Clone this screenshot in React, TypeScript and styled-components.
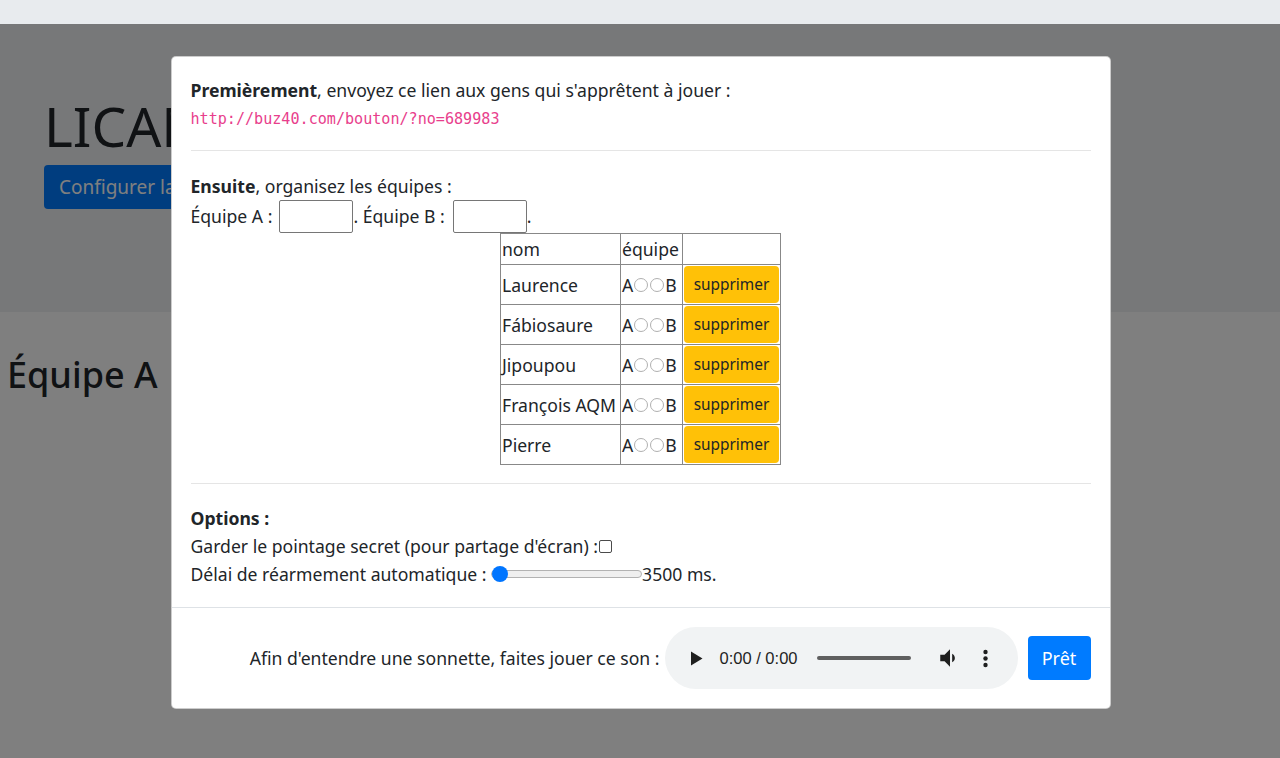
import React from "react";
import styled, { createGlobalStyle } from "styled-components";

const Global = createGlobalStyle`
  html, body { margin: 0; padding: 0; }
  body {
    font-family: "Noto Sans", "Open Sans", sans-serif;
    font-size: 17.6px;
    line-height: 1.5;
    color: #212529;
    background: #fff;
    width: 1280px;
    height: 758px;
    overflow: hidden;
  }
  * { box-sizing: border-box; }
`;

const Page = styled.div`
  position: relative;
  width: 1280px;
  height: 758px;
`;

const TopBar = styled.div`
  height: 24px;
  background: #e8ebee;
`;

const Jumbotron = styled.div`
  background: #eef0f3;
  height: 288px;
  padding: 69px 44px 0 44px;
`;

const Title = styled.h1`
  margin: 0 0 6px 0;
  font-size: 55px;
  font-weight: 400;
  line-height: 1.2;
`;

const BigButton = styled.button`
  height: 44px;
  padding: 0 15px;
  background: #007bff;
  color: #fff;
  border: none;
  border-radius: 4px;
  font-family: inherit;
  font-size: 19px;
`;

const TeamHeading = styled.h2`
  margin: 41px 0 0 7px;
  font-size: 36px;
  font-weight: 500;
  line-height: 1.2;
`;

const Backdrop = styled.div`
  position: absolute;
  top: 24px;
  left: 0;
  right: 0;
  bottom: 0;
  background: rgba(0, 0, 0, 0.5);
  display: flex;
  justify-content: center;
  align-items: flex-start;
  padding: 32px 0 0 1px;
`;

const Modal = styled.div`
  width: 940px;
  background: #fff;
  border: 1px solid rgba(0, 0, 0, 0.2);
  border-radius: 5px;
  display: flex;
  flex-direction: column;
`;

const Body = styled.div`
  padding: 21px 19px 19px 19px;
`;

const Line = styled.div`
  line-height: 24px;
`;

const Code = styled.div`
  font-family: "DejaVu Sans Mono", "Liberation Mono", monospace;
  font-size: 15.1px;
  color: #e83e8c;
  line-height: 22px;
  margin-top: 6px;
`;

const Rule = styled.hr<{ $top: number; $bottom: number }>`
  border: 0;
  border-top: 1px solid rgba(0, 0, 0, 0.1);
  margin: ${(p) => `${p.$top}px 0 ${p.$bottom}px 0`};
`;

const InputRow = styled.div`
  display: flex;
  align-items: center;
  height: 34px;
  margin-top: 1px;
`;

const TeamInput = styled.input<{ $ml: number }>`
  width: 74px;
  height: 33px;
  border: 1px solid #767676;
  border-radius: 2px;
  padding: 0 4px;
  margin: 0 0 0 ${(p) => p.$ml}px;
  font-family: inherit;
  font-size: 16px;
`;

const Table = styled.table`
  margin: 0 auto;
  border-collapse: collapse;
  border: 1px solid #555;
`;

const HeadCell = styled.td`
  border: 1px solid #888;
  padding: 0 1px;
  height: 31px;
  font-weight: 400;
  text-align: left;
  line-height: 24px;
`;

const Cell = styled.td<{ $w?: number }>`
  border: 1px solid #888;
  padding: 1px 1px;
  height: 39px;
  width: ${(p) => (p.$w ? `${p.$w}px` : "auto")};
  white-space: nowrap;
  line-height: 24px;
`;

const TeamPick = styled.span`
  display: inline-flex;
  align-items: center;
`;

const Radio = styled.input`
  appearance: none;
  width: 14px;
  height: 14px;
  margin: 0 1px;
  border: 1px solid #b0b0b0;
  border-radius: 50%;
  background: #fff;
`;

const DeleteButton = styled.button`
  width: 95px;
  height: 37px;
  background: #ffc107;
  color: #212529;
  border: none;
  border-radius: 4px;
  font-family: inherit;
  font-size: 15.4px;
  padding: 0;
  display: block;
`;

const Strong = styled.b`
  font-weight: 700;
`;

const OptionRow = styled.div`
  display: flex;
  align-items: center;
  height: 28px;
  white-space: pre;
`;

const Check = styled.input`
  appearance: none;
  width: 13px;
  height: 13px;
  margin: 0 0 0 1px;
  border: 1px solid #4a4a4a;
  border-radius: 2px;
  background: #fff;
`;

const Range = styled.input`
  appearance: none;
  width: 151px;
  height: 16px;
  margin: 0;
  background: transparent;
  &::-webkit-slider-runnable-track {
    height: 8px;
    background: #efefef;
    border: 1px solid #b2b2b2;
    border-radius: 4px;
  }
  &::-webkit-slider-thumb {
    appearance: none;
    width: 16px;
    height: 16px;
    margin-top: -5px;
    border-radius: 50%;
    background: #0075ff;
    border: none;
  }
`;

const Footer = styled.div`
  border-top: 1px solid #dee2e6;
  height: 101px;
  padding: 0 19px;
  display: flex;
  justify-content: flex-end;
  align-items: center;
`;

const FooterText = styled.span`
  margin-right: 5px;
`;

const Player = styled.div`
  width: 353px;
  height: 62px;
  border-radius: 31px;
  background: #f1f3f4;
  display: flex;
  align-items: center;
  padding: 0 22px 0 25px;
  color: #1f1f1f;
  font-family: "Liberation Sans", Arial, sans-serif;
`;

const Time = styled.span`
  margin-left: 17px;
  font-size: 16.5px;
  white-space: nowrap;
`;

const Track = styled.div`
  width: 94px;
  height: 4px;
  border-radius: 2px;
  background: #5f5f5f;
  margin-left: 20px;
`;

const IconBox = styled.span<{ $ml: number }>`
  display: inline-flex;
  margin-left: ${(p) => p.$ml}px;
`;

const ReadyButton = styled.button`
  margin-left: 10px;
  height: 44px;
  width: 63px;
  background: #007bff;
  color: #fff;
  border: none;
  border-radius: 4px;
  font-family: inherit;
  font-size: 18px;
  padding: 0;
`;

const players = ["Laurence", "Fábiosaure", "Jipoupou", "François AQM", "Pierre"];

export default function App() {
  return (
    <Page>
      <Global />
      <TopBar />
      <Jumbotron>
        <Title>LICAM</Title>
        <BigButton>Configurer la partie</BigButton>
      </Jumbotron>
      <TeamHeading>Équipe A</TeamHeading>
      <Backdrop>
        <Modal>
          <Body>
            <Line>
              <Strong>Premièrement</Strong>, envoyez ce lien aux gens qui s'apprêtent à jouer :
            </Line>
            <Code>http://buz40.com/bouton/?no=689983</Code>
            <Rule $top={20} $bottom={23} />
            <Line>
              <Strong>Ensuite</Strong>, organisez les équipes :
            </Line>
            <InputRow>
              Équipe A :<TeamInput $ml={7} type="text" />. Équipe B :<TeamInput $ml={8} type="text" />.
            </InputRow>
            <Table>
              <tbody>
                <tr>
                  <HeadCell>nom</HeadCell>
                  <HeadCell>équipe</HeadCell>
                  <HeadCell></HeadCell>
                </tr>
                {players.map((name, i) => (
                  <tr key={name}>
                    <Cell $w={120}>{name}</Cell>
                    <Cell $w={62}>
                      <TeamPick>
                        A<Radio type="radio" name={`p${i}`} />
                        <Radio type="radio" name={`p${i}`} />B
                      </TeamPick>
                    </Cell>
                    <Cell $w={98}>
                      <DeleteButton>supprimer</DeleteButton>
                    </Cell>
                  </tr>
                ))}
              </tbody>
            </Table>
            <Rule $top={18} $bottom={20} />
            <OptionRow>
              <Strong>Options :</Strong>
            </OptionRow>
            <OptionRow>
              Garder le pointage secret (pour partage d'écran) :<Check type="checkbox" />
            </OptionRow>
            <OptionRow>
              Délai de réarmement automatique : <Range type="range" min={3500} max={10000} defaultValue={3500} />
              3500 ms.
            </OptionRow>
          </Body>
          <Footer>
            <FooterText>Afin d'entendre une sonnette, faites jouer ce son :</FooterText>
            <Player>
              <svg width="13" height="15" viewBox="0 0 13 15">
                <path d="M1 0.5 L12.5 7.5 L1 14.5 Z" fill="#1f1f1f" />
              </svg>
              <Time>0:00 / 0:00</Time>
              <Track />
              <IconBox $ml={26}>
                <svg width="26" height="26" viewBox="0 0 24 24">
                  <path
                    d="M3 9v6h4l5 5V4L7 9H3zm13.5 3c0-1.77-1.02-3.29-2.5-4.03v8.05c1.48-.73 2.5-2.25 2.5-4.02z"
                    fill="#1f1f1f"
                  />
                </svg>
              </IconBox>
              <IconBox $ml={20}>
                <svg width="5" height="19" viewBox="0 0 5 19">
                  <circle cx="2.5" cy="3" r="2.2" fill="#1f1f1f" />
                  <circle cx="2.5" cy="9.5" r="2.2" fill="#1f1f1f" />
                  <circle cx="2.5" cy="16" r="2.2" fill="#1f1f1f" />
                </svg>
              </IconBox>
            </Player>
            <ReadyButton>Prêt</ReadyButton>
          </Footer>
        </Modal>
      </Backdrop>
    </Page>
  );
}
